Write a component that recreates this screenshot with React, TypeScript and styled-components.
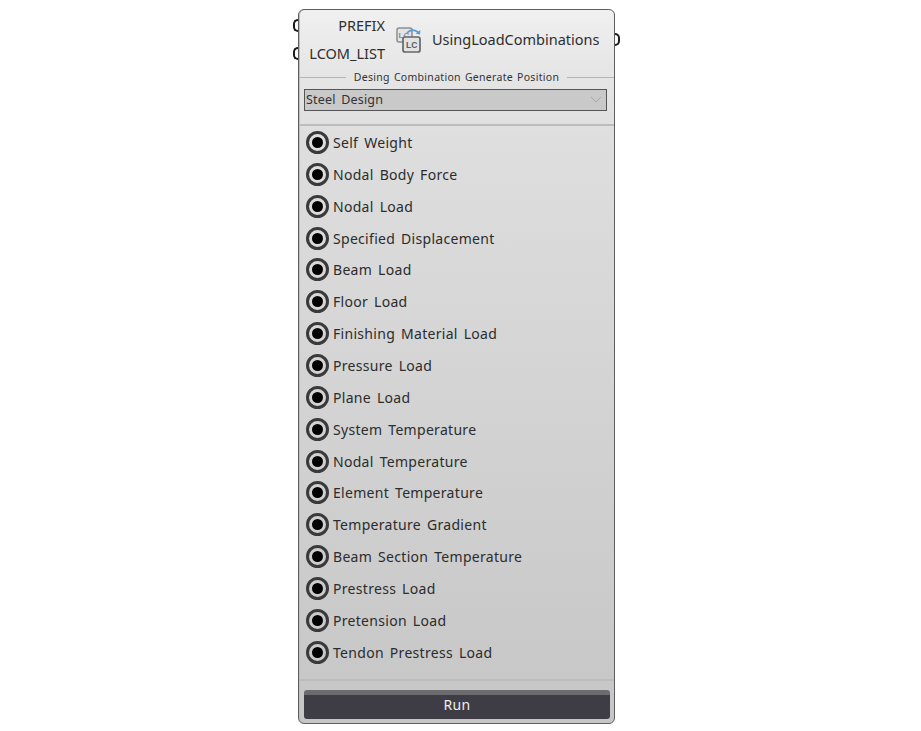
import React from "react";
import styled, { createGlobalStyle } from "styled-components";

const LOAD_CASES = [
  "Self Weight",
  "Nodal Body Force",
  "Nodal Load",
  "Specified Displacement",
  "Beam Load",
  "Floor Load",
  "Finishing Material Load",
  "Pressure Load",
  "Plane Load",
  "System Temperature",
  "Nodal Temperature",
  "Element Temperature",
  "Temperature Gradient",
  "Beam Section Temperature",
  "Prestress Load",
  "Pretension Load",
  "Tendon Prestress Load",
];

const ComponentIcon = () => (
  <svg width="30" height="30" viewBox="0 0 30 30" fill="none">
    <rect x="3" y="4" width="15" height="14" rx="2" fill="#e4e4e4" stroke="#8a8e92" strokeWidth="1.5" />
    <text x="4.5" y="14" fontSize="8" fontWeight="700" fontFamily="Liberation Sans, sans-serif" fill="#868a8e">
      LC
    </text>
    <path d="M13 9 C16 5.5 20 5.5 24 8" stroke="#5b9bd5" strokeWidth="1.6" />
    <path d="M26.5 6 L26 10.5 L21.5 9.5 Z" fill="#5b9bd5" />
    <rect x="9" y="13" width="17" height="15" rx="2" fill="#e2e2e2" stroke="#64686c" strokeWidth="1.7" />
    <text x="12" y="24" fontSize="8.5" fontWeight="700" fontFamily="Liberation Sans, sans-serif" fill="#5a5e62">
      LC
    </text>
  </svg>
);

const Chevron = () => (
  <svg width="12" height="7" viewBox="0 0 12 7" fill="none">
    <path d="M1 1 L6 6 L11 1" stroke="#a9a9a9" strokeWidth="1" />
  </svg>
);

const App = () => {
  return (
    <Stage>
      <GlobalStyle />
      <Panel>
        <Port $side="left" $top={9} />
        <Port $side="left" $top={37} />
        <Port $side="right" $top={23} />
        <Header>
          <Inputs>
            <span>PREFIX</span>
            <span>LCOM_LIST</span>
          </Inputs>
          <IconSlot>
            <ComponentIcon />
          </IconSlot>
          <Title>UsingLoadCombinations</Title>
        </Header>
        <SectionLabel>
          <span>Desing Combination Generate Position</span>
        </SectionLabel>
        <Select>
          <span>Steel Design</span>
          <Chevron />
        </Select>
        <Divider $gap={13} />
        <RadioList>
          {LOAD_CASES.map((name) => (
            <RadioRow key={name}>
              <Radio />
              <span>{name}</span>
            </RadioRow>
          ))}
        </RadioList>
        <Divider $gap={11} />
        <RunButton>Run</RunButton>
      </Panel>
    </Stage>
  );
};

const GlobalStyle = createGlobalStyle`
  html, body {
    margin: 0;
    background: #ffffff;
  }
  body {
    font-family: "Noto Sans", "Noto Sans CJK KR", sans-serif;
  }
`;

const Stage = styled.div`
  display: flex;
  justify-content: center;
  width: 921px;
  height: 731px;
  padding-top: 9px;
  box-sizing: border-box;
  overflow: hidden;
`;

const Panel = styled.div`
  position: relative;
  display: flex;
  flex-direction: column;
  box-sizing: border-box;
  width: 317px;
  height: 715px;
  margin-left: -8px;
  padding-top: 1px;
  border: 1px solid #5e5e5e;
  border-radius: 6px;
  background: linear-gradient(#f0f0f0 0px, #e6e6e6 60px, #dedede 130px, #c6c6c6 100%);
  box-shadow: inset 1px 0 0 #bdbdbd;
`;

const Port = styled.i<{ $side: "left" | "right"; $top: number }>`
  position: absolute;
  top: ${(p) => p.$top}px;
  ${(p) => (p.$side === "left" ? "left: -6px;" : "right: -6px;")}
  width: 5px;
  height: 13px;
  box-sizing: border-box;
  border: 2.5px solid #1c1c1c;
  ${(p) =>
    p.$side === "left"
      ? "border-right: 0; border-radius: 7px 0 0 7px;"
      : "border-left: 0; border-radius: 0 7px 7px 0;"}
`;

const Header = styled.div`
  display: flex;
  align-items: center;
  height: 56px;
  color: #2e2e2e;
  font-size: 14.5px;
`;

const Inputs = styled.div`
  display: flex;
  flex-direction: column;
  align-items: flex-end;
  gap: 7px;
  width: 86px;
  line-height: 21px;
`;

const IconSlot = styled.div`
  display: flex;
  width: 30px;
  height: 30px;
  margin-left: 9px;
`;

const Title = styled.div`
  margin-left: 8px;
  margin-bottom: 1px;
  white-space: nowrap;
`;

const SectionLabel = styled.div`
  display: flex;
  align-items: center;
  gap: 8px;
  height: 16px;
  margin-top: 2px;
  color: #333333;
  font-size: 10.5px;
  letter-spacing: 0.3px;
  word-spacing: 1px;
  white-space: nowrap;

  &::before,
  &::after {
    content: "";
    flex: 1;
    height: 1px;
    background: #b4b4b4;
  }
`;

const Select = styled.div`
  display: flex;
  align-items: center;
  justify-content: space-between;
  box-sizing: border-box;
  width: 303px;
  height: 22px;
  margin: 4px 0 0 5px;
  padding: 0 4px 2px 1px;
  border: 1px solid #555555;
  background: #c9c9c9;
  color: #333333;
  font-size: 12.5px;
  letter-spacing: 0.2px;
  word-spacing: 2px;
`;

const Divider = styled.div<{ $gap: number }>`
  flex: none;
  height: 2px;
  margin-top: ${(p) => p.$gap}px;
  background: #bcbcbc;
`;

const RadioList = styled.div`
  display: flex;
  flex-direction: column;
  margin-top: 0.5px;
`;

const RadioRow = styled.div`
  display: flex;
  align-items: center;
  gap: 4px;
  height: 31.87px;
  padding-left: 7px;
  color: #2c2c2c;
  font-size: 14px;
  letter-spacing: 0.3px;
  word-spacing: 2px;
  white-space: nowrap;
`;

const Radio = styled.i`
  position: relative;
  flex: none;
  box-sizing: border-box;
  width: 23px;
  height: 23px;
  border: 3px solid #3a3a3c;
  border-radius: 50%;

  &::after {
    content: "";
    position: absolute;
    inset: 3px;
    border-radius: 50%;
    background: #000000;
  }
`;

const RunButton = styled.div`
  display: flex;
  align-items: center;
  justify-content: center;
  box-sizing: border-box;
  width: 306px;
  height: 29px;
  margin: 9px 0 0 5px;
  border-radius: 3px;
  background: linear-gradient(#6c6c70 0 5px, #3e3c44 5px);
  color: #eeeeee;
  font-size: 14px;
  letter-spacing: 0.4px;
`;

export default App;
